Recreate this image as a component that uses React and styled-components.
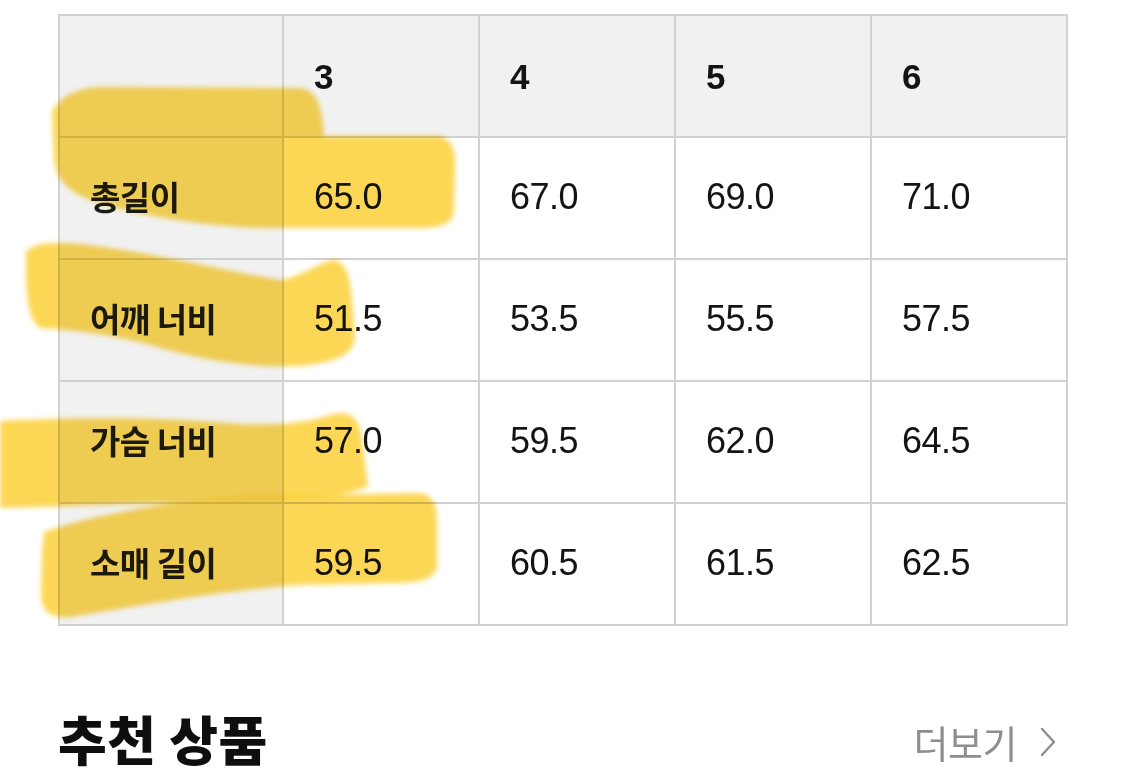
import React from 'react';
import styled, { createGlobalStyle } from 'styled-components';

const GlobalStyle = createGlobalStyle`
    html, body {
        margin: 0;
        padding: 0;
        background: #fff;
    }
    body {
        font-family: 'Liberation Sans', 'Noto Sans CJK KR', sans-serif;
        color: #141414;
    }
`;

const sizes = ['3', '4', '5', '6'];

const rows = [
    { label: '총길이', values: ['65.0', '67.0', '69.0', '71.0'] },
    { label: '어깨 너비', values: ['51.5', '53.5', '55.5', '57.5'] },
    { label: '가슴 너비', values: ['57.0', '59.5', '62.0', '64.5'] },
    { label: '소매 길이', values: ['59.5', '60.5', '61.5', '62.5'] },
];

// highlighter marks drawn over the table
const strokes = [
    'M52,112 C60,96 78,88 100,87 L300,88 C316,90 322,104 324,136 L440,136 C452,140 456,150 455,168 L454,212 C452,224 440,228 420,228 L260,228 C200,226 130,214 90,200 C66,190 56,178 54,160 Z',
    'M26,252 C34,242 52,242 80,244 C150,252 220,270 280,280 C300,278 318,262 334,260 C346,262 350,276 352,300 L355,338 C352,356 336,362 300,366 C250,368 200,360 150,345 C110,334 70,330 40,328 C30,322 27,300 26,280 Z',
    'M0,421 C60,418 150,416 240,424 C280,426 310,422 334,414 C352,410 360,420 362,440 L368,486 C350,496 310,498 250,500 C170,502 80,506 0,508 Z',
    'M44,532 C90,516 170,500 250,496 L420,493 C433,495 437,505 437,520 L437,566 C435,578 424,582 400,583 L300,585 C220,590 140,606 70,617 C52,619 42,612 41,596 L42,556 Z',
];

const App = () => (
    <>
        <GlobalStyle />
        <Page>
            <SizeTable>
                <HeadCell />
                {sizes.map((size) => (
                    <HeadCell key={size}>{size}</HeadCell>
                ))}
                {rows.map(({ label, values }) => (
                    <React.Fragment key={label}>
                        <LabelCell>{label}</LabelCell>
                        {values.map((value, i) => (
                            <ValueCell key={sizes[i]}>{value}</ValueCell>
                        ))}
                    </React.Fragment>
                ))}
            </SizeTable>

            <SectionHeader>
                <SectionTitle>추천 상품</SectionTitle>
                <MoreLink>
                    더보기
                    <svg width="18" height="30" viewBox="0 0 18 30" fill="none">
                        <polyline
                            points="3,2 15,15 3,28"
                            stroke="#8e8e8e"
                            strokeWidth="2.4"
                            strokeLinecap="round"
                            strokeLinejoin="round"
                        />
                    </svg>
                </MoreLink>
            </SectionHeader>

            <Highlights viewBox="0 0 1125 769" width="1125" height="769">
                <defs>
                    <filter id="soft" x="-10%" y="-10%" width="120%" height="120%">
                        <feGaussianBlur stdDeviation="2.6" />
                    </filter>
                </defs>
                <g filter="url(#soft)">
                    {strokes.map((d) => (
                        <path key={d} d={d} fill="#fbcd2a" fillOpacity="0.8" />
                    ))}
                </g>
            </Highlights>
        </Page>
    </>
);

export default App;

const Page = styled.div`
    position: relative;
    width: 1125px;
    height: 769px;
    overflow: hidden;
    padding-top: 14px;
    box-sizing: border-box;
`;

const SizeTable = styled.div`
    margin-left: 58px;
    width: 1010px;
    display: grid;
    grid-template-columns: 224px repeat(4, 196px);
    grid-auto-rows: 122px;
    border-top: 2px solid #d2d2d2;
    border-left: 2px solid #d2d2d2;
    box-sizing: border-box;
`;

const Cell = styled.div`
    display: flex;
    align-items: center;
    padding-left: 30px;
    border-right: 2px solid #d2d2d2;
    border-bottom: 2px solid #d2d2d2;
    box-sizing: border-box;
    font-size: 36px;
    white-space: nowrap;
`;

const HeadCell = styled(Cell)`
    background: #f1f1f1;
    font-weight: 700;
    font-size: 35px;
    padding-top: 2px;
`;

const LabelCell = styled(Cell)`
    background: #f1f1f1;
    font-family: 'Noto Sans CJK KR', sans-serif;
    font-weight: 700;
    font-size: 33px;
    letter-spacing: -0.5px;
    color: #1c1c1c;
    padding-bottom: 4px;
`;

const ValueCell = styled(Cell)`
    background: #fff;
    letter-spacing: -0.5px;
    padding-bottom: 2px;
`;

const SectionHeader = styled.div`
    display: flex;
    align-items: center;
    justify-content: space-between;
    margin-top: 86px;
    padding: 0 68px 0 58px;
`;

const SectionTitle = styled.h2`
    margin: 0;
    font-family: 'Noto Sans CJK KR', sans-serif;
    font-weight: 900;
    font-size: 53px;
    line-height: 1;
    letter-spacing: 0.5px;
    color: #0e0e0e;
`;

const MoreLink = styled.span`
    display: flex;
    align-items: center;
    gap: 22px;
    margin-top: 6px;
    font-family: 'Noto Sans CJK KR', sans-serif;
    font-size: 38px;
    line-height: 1;
    font-weight: 400;
    color: #8e8e8e;
    letter-spacing: -0.5px;
`;

const Highlights = styled.svg`
    position: absolute;
    left: 0;
    top: 0;
    pointer-events: none;
    mix-blend-mode: multiply;
`;
